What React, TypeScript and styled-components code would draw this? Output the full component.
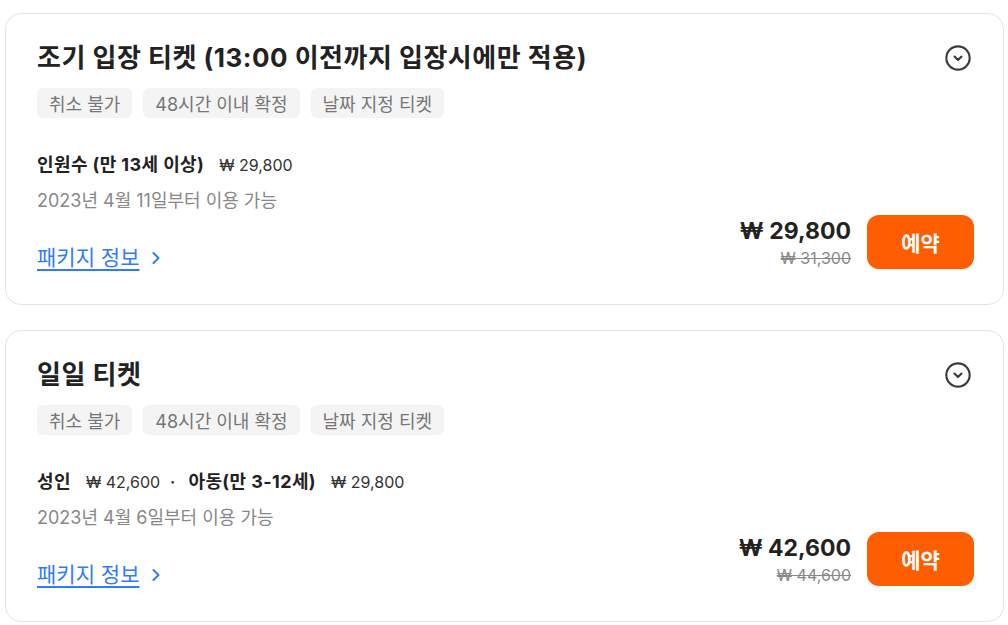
import React from "react";
import styled, { createGlobalStyle } from "styled-components";

const GlobalStyle = createGlobalStyle`
  body {
    margin: 0;
    background: #fff;
    font-family: "Inter", "Noto Sans CJK KR", sans-serif;
    color: #222;
  }
  * { box-sizing: border-box; }
`;

const Page = styled.div`
  display: flex;
  flex-direction: column;
  gap: 25px;
  padding: 13px 4px 0 5px;
`;

const Card = styled.section`
  border: 1px solid #e4e4e4;
  border-radius: 16px;
  padding: 28px 29px 34px 31px;
  background: #fff;
`;

const Header = styled.div`
  display: flex;
  align-items: center;
  justify-content: space-between;
`;

const Title = styled.h2`
  margin: 0;
  font-size: 26px;
  line-height: 32px;
  font-weight: 700;
  color: #222;
  letter-spacing: 0.5px;
`;

const ToggleButton = styled.button`
  border: 0;
  background: none;
  padding: 0;
  margin-right: 2px;
  width: 28px;
  height: 28px;
  display: flex;
  align-items: center;
  justify-content: center;
  color: #3a3a3a;
  cursor: pointer;
`;

const Tags = styled.div`
  display: flex;
  gap: 11px;
  margin-top: 14px;
`;

const Tag = styled.span`
  display: inline-flex;
  align-items: center;
  height: 30px;
  padding: 0 12px;
  border-radius: 6px;
  background: #f4f4f4;
  color: #767676;
  font-size: 18px;
`;

const Body = styled.div`
  display: flex;
  align-items: flex-end;
  justify-content: space-between;
  margin-top: 35px;
`;

const Info = styled.div`
  display: flex;
  flex-direction: column;
`;

const OptionRow = styled.div`
  display: flex;
  align-items: center;
  gap: 15px;
  line-height: 24px;
`;

const OptionName = styled.span`
  font-size: 18px;
  font-weight: 700;
  color: #222;
  letter-spacing: 0.4px;
`;

const OptionPrice = styled.span`
  font-size: 16px;
  color: #333;
`;

const Dot = styled.span`
  font-size: 16px;
  font-weight: 700;
  color: #333;
  margin: 0 -2px 0 -5px;
`;

const DateText = styled.div`
  margin-top: 12px;
  font-size: 18px;
  line-height: 24px;
  color: #888;
`;

const PackageLink = styled.a`
  margin-top: 33px;
  display: inline-flex;
  align-items: center;
  gap: 10px;
  font-size: 21px;
  line-height: 24px;
  color: #2f7cf6;
  text-decoration: none;
  cursor: pointer;

  span {
    text-decoration: underline;
    text-underline-offset: 4px;
    text-decoration-thickness: 2px;
  }
`;

const Purchase = styled.div`
  display: flex;
  align-items: flex-end;
  gap: 16px;
  padding-bottom: 1px;
`;

const PriceBlock = styled.div`
  display: flex;
  flex-direction: column;
  align-items: flex-end;
`;

const SalePrice = styled.div`
  font-size: 23px;
  line-height: 32px;
  font-weight: 700;
  color: #222;
`;

const OriginalPrice = styled.del`
  font-size: 16px;
  line-height: 22px;
  color: #888;
`;

const ReserveButton = styled.button`
  width: 107px;
  height: 54px;
  border: 0;
  border-radius: 12px;
  background: #ff5e00;
  color: #fff;
  font-family: inherit;
  font-size: 21px;
  font-weight: 700;
  cursor: pointer;
`;

const ChevronCircle = () => (
  <svg width="28" height="28" viewBox="0 0 24 24" fill="none" stroke="currentColor" strokeWidth="1.8" strokeLinecap="round" strokeLinejoin="round">
    <circle cx="12" cy="12" r="10" />
    <path d="M9 10.8 12 13.8l3-3" />
  </svg>
);

const ChevronRight = () => (
  <svg width="12" height="16" viewBox="0 0 12 16" fill="none" stroke="currentColor" strokeWidth="2" strokeLinecap="round" strokeLinejoin="round">
    <path d="M3.5 3 8.5 8l-5 5" />
  </svg>
);

interface Option {
  name: string;
  price: string;
}

interface Ticket {
  title: string;
  options: Option[];
  date: string;
  price: string;
  original: string;
}

const tickets: Ticket[] = [
  {
    title: "조기 입장 티켓 (13:00 이전까지 입장시에만 적용)",
    options: [{ name: "인원수 (만 13세 이상)", price: "₩ 29,800" }],
    date: "2023년 4월 11일부터 이용 가능",
    price: "₩ 29,800",
    original: "₩ 31,300",
  },
  {
    title: "일일 티켓",
    options: [
      { name: "성인", price: "₩ 42,600" },
      { name: "아동(만 3-12세)", price: "₩ 29,800" },
    ],
    date: "2023년 4월 6일부터 이용 가능",
    price: "₩ 42,600",
    original: "₩ 44,600",
  },
];

const tagList = ["취소 불가", "48시간 이내 확정", "날짜 지정 티켓"];

function TicketCard({ ticket }: { ticket: Ticket }) {
  return (
    <Card>
      <Header>
        <Title>{ticket.title}</Title>
        <ToggleButton aria-label="펼치기">
          <ChevronCircle />
        </ToggleButton>
      </Header>
      <Tags>
        {tagList.map((t) => (
          <Tag key={t}>{t}</Tag>
        ))}
      </Tags>
      <Body>
        <Info>
          <OptionRow>
            {ticket.options.map((o, i) => (
              <React.Fragment key={o.name}>
                {i > 0 && <Dot>·</Dot>}
                <OptionName>{o.name}</OptionName>
                <OptionPrice>{o.price}</OptionPrice>
              </React.Fragment>
            ))}
          </OptionRow>
          <DateText>{ticket.date}</DateText>
          <PackageLink>
            <span>패키지 정보</span>
            <ChevronRight />
          </PackageLink>
        </Info>
        <Purchase>
          <PriceBlock>
            <SalePrice>{ticket.price}</SalePrice>
            <OriginalPrice>{ticket.original}</OriginalPrice>
          </PriceBlock>
          <ReserveButton>예약</ReserveButton>
        </Purchase>
      </Body>
    </Card>
  );
}

export default function App() {
  return (
    <>
      <GlobalStyle />
      <Page>
        {tickets.map((t) => (
          <TicketCard key={t.title} ticket={t} />
        ))}
      </Page>
    </>
  );
}
